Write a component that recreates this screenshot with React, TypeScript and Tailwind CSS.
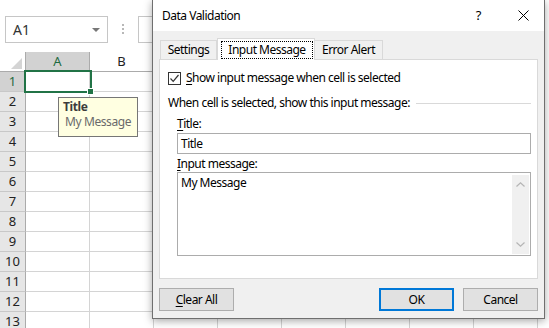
import React from "react";

const ROWS = [1, 2, 3, 4, 5, 6, 7, 8, 9, 10, 11, 12, 13];
const COLS = ["A", "B", "C", "D", "E", "F", "G", "H"];

function Sheet() {
  return (
    <div className="flex flex-col">
      <div className="h-[52px] flex items-start pt-[16px] pl-[5px]">
        <div className="w-[103px] h-[27px] border border-[#c6c6c6] flex items-center justify-between pl-[7px] pr-[7px]">
          <span className="text-[14px] leading-none text-[#333]">A1</span>
          <svg width="8" height="4" viewBox="0 0 8 4">
            <path d="M0 0h8L4 4z" fill="#777" />
          </svg>
        </div>
        <div className="ml-[14px] mt-[8px] flex flex-col gap-[2px]">
          <div className="w-[2px] h-[2px] bg-[#b8b8b8]" />
          <div className="w-[2px] h-[2px] bg-[#b8b8b8]" />
          <div className="w-[2px] h-[2px] bg-[#b8b8b8]" />
        </div>
        <div className="ml-[14px] w-[200px] h-[27px] border border-[#c6c6c6]" />
      </div>
      <div className="flex h-[20px]">
        <div className="w-[26px] shrink-0 border-r border-b border-[#ababab] bg-white flex items-end justify-end pr-[3px] pb-[2px]">
          <svg width="11" height="11" viewBox="0 0 11 11">
            <path d="M11 0V11H0z" fill="#d4d4d4" />
          </svg>
        </div>
        {COLS.map((c, i) => (
          <div
            key={c}
            className={
              "w-[64px] shrink-0 border-r border-b flex items-center justify-center text-[13px] " +
              (i === 0
                ? "bg-[#d2d2d2] text-[#1e6b41] border-r-[#ababab] border-b-[#ababab]"
                : "bg-white text-[#222] border-r-[#d4d4d4] border-b-[#ababab]")
            }
          >
            {c}
          </div>
        ))}
      </div>
      {ROWS.map((r) => (
        <div key={r} className="flex h-[20px]">
          <div
            className={
              "w-[26px] shrink-0 border-r border-r-[#ababab] border-b border-b-[#c8c8c8] flex items-center justify-center text-[13px] " +
              (r === 1 ? "bg-[#d2d2d2] text-[#1e6b41]" : "bg-[#e6e6e6] text-[#222]")
            }
          >
            {r}
          </div>
          {COLS.map((c) => (
            <div key={c} className="w-[64px] shrink-0 border-r border-b border-[#d4d4d4] bg-white" />
          ))}
        </div>
      ))}
    </div>
  );
}

function Selection() {
  return (
    <>
      <div className="absolute left-[24px] top-[70px] w-[68px] h-[23px] border-2 border-[#217346]" />
      <div className="absolute left-[87px] top-[88px] w-[7px] h-[7px] bg-[#217346] border border-white" />
    </>
  );
}

function Tooltip() {
  return (
    <div className="absolute left-[58px] top-[97px] w-[80px] h-[40px] bg-[#ffffe1] border border-[#767676] pl-[4px] pt-[1px] flex flex-col text-[12px] leading-[15px] tracking-[-0.4px]">
      <span className="font-bold text-[#3c3c3c]">Title</span>
      <span className="pl-[2px] text-[#6a6a6a]">My Message</span>
    </div>
  );
}

function U({ children }: { children: React.ReactNode }) {
  return <span className="underline underline-offset-[2px]">{children}</span>;
}

function Dialog() {
  return (
    <div className="absolute left-[152px] top-0 w-[393px] h-[319px] border-x border-b border-[#6f6f6f] bg-[#f0f0f0] shadow-[0_2px_8px_rgba(0,0,0,0.35)] flex flex-col text-[12px] tracking-[-0.5px] text-black">
      <div className="h-[31px] shrink-0 bg-white flex items-center pl-[9px] pr-[15px]">
        <span className="flex-1 leading-none">Data Validation</span>
        <span className="text-[13px] leading-none mr-[37px]">?</span>
        <svg width="11" height="11" viewBox="0 0 11 11">
          <path d="M0.5 0.5L10.5 10.5M10.5 0.5L0.5 10.5" stroke="#000" strokeWidth="1" />
        </svg>
      </div>
      <div className="flex-1 flex flex-col px-[6px]">
        <div className="mt-[7px] h-[21px] flex items-end">
          <div className="ml-[1px] w-[57px] h-[19px] bg-[#f0f0f0] border border-b-0 border-[#d9d9d9] flex items-center justify-center">
            Settings
          </div>
          <div className="relative z-10 -mb-[1px] w-[98px] h-[22px] bg-white border border-b-0 border-[#d9d9d9] pl-[3px] pr-[1px] pt-[2px]">
            <div className="h-[18px] border border-dotted border-black flex items-center justify-center">
              Input Message
            </div>
          </div>
          <div className="w-[68px] h-[19px] bg-[#f0f0f0] border border-b-0 border-l-0 border-[#d9d9d9] flex items-center justify-center">
            Error Alert
          </div>
        </div>
        <div className="h-[220px] border border-[#d9d9d9] bg-white flex flex-col pl-[8px] pr-[6px]">
          <div className="mt-[10px] h-[16px] flex items-center">
            <div className="w-[13px] h-[13px] border border-[#333] bg-white flex items-center justify-center">
              <svg width="11" height="11" viewBox="0 0 11 11">
                <path d="M1.5 5.5L4.2 8.3L9.5 2" fill="none" stroke="#333" strokeWidth="1.2" />
              </svg>
            </div>
            <span className="ml-[5px] leading-none">
              <U>S</U>how input message when cell is selected
            </span>
          </div>
          <div className="mt-[9px] h-[16px] flex items-center">
            <span className="leading-none whitespace-nowrap">When cell is selected, show this input message:</span>
            <div className="flex-1 ml-[6px] h-px bg-[#d9d9d9]" />
          </div>
          <div className="pl-[9px] flex flex-col">
            <div className="mt-[5px] h-[16px] flex items-center leading-none">
              <span>
                <U>T</U>itle:
              </span>
            </div>
            <div className="mt-[1px] h-[21px] border border-[#acacac] bg-white flex items-center pl-[3px] leading-none">
              Title
            </div>
            <div className="mt-[2px] h-[16px] flex items-center leading-none">
              <span>
                <U>I</U>nput message:
              </span>
            </div>
            <div className="h-[84px] border border-[#acacac] bg-white flex">
              <div className="flex-1 pl-[3px] pt-[2px] leading-[16px]">My Message</div>
              <div className="w-[17px] mt-[2px] mb-[1px] mr-[1px] bg-[#f0f0f0] flex flex-col items-center justify-between py-[7px]">
                <svg width="9" height="5" viewBox="0 0 9 5">
                  <path d="M0.5 4.5L4.5 0.8L8.5 4.5" fill="none" stroke="#b5b5b5" strokeWidth="1.2" />
                </svg>
                <svg width="9" height="5" viewBox="0 0 9 5">
                  <path d="M0.5 0.5L4.5 4.2L8.5 0.5" fill="none" stroke="#b5b5b5" strokeWidth="1.2" />
                </svg>
              </div>
            </div>
          </div>
        </div>
        <div className="mt-[9px] flex items-start justify-between">
          <button className="w-[75px] h-[23px] bg-[#e1e1e1] border border-[#adadad] flex items-center justify-center leading-none">
            <span>
              <U>C</U>lear All
            </span>
          </button>
          <div className="flex gap-[9px]">
            <button className="w-[75px] h-[23px] bg-[#e1e1e1] border-2 border-[#0078d7] flex items-center justify-center leading-none">
              OK
            </button>
            <button className="w-[75px] h-[23px] bg-[#e1e1e1] border border-[#adadad] flex items-center justify-center leading-none">
              Cancel
            </button>
          </div>
        </div>
      </div>
    </div>
  );
}

export default function App() {
  return (
    <div className="relative w-[549px] h-[328px] overflow-hidden bg-white font-['Noto_Sans',sans-serif] text-black">
      <Sheet />
      <Selection />
      <Tooltip />
      <Dialog />
    </div>
  );
}
